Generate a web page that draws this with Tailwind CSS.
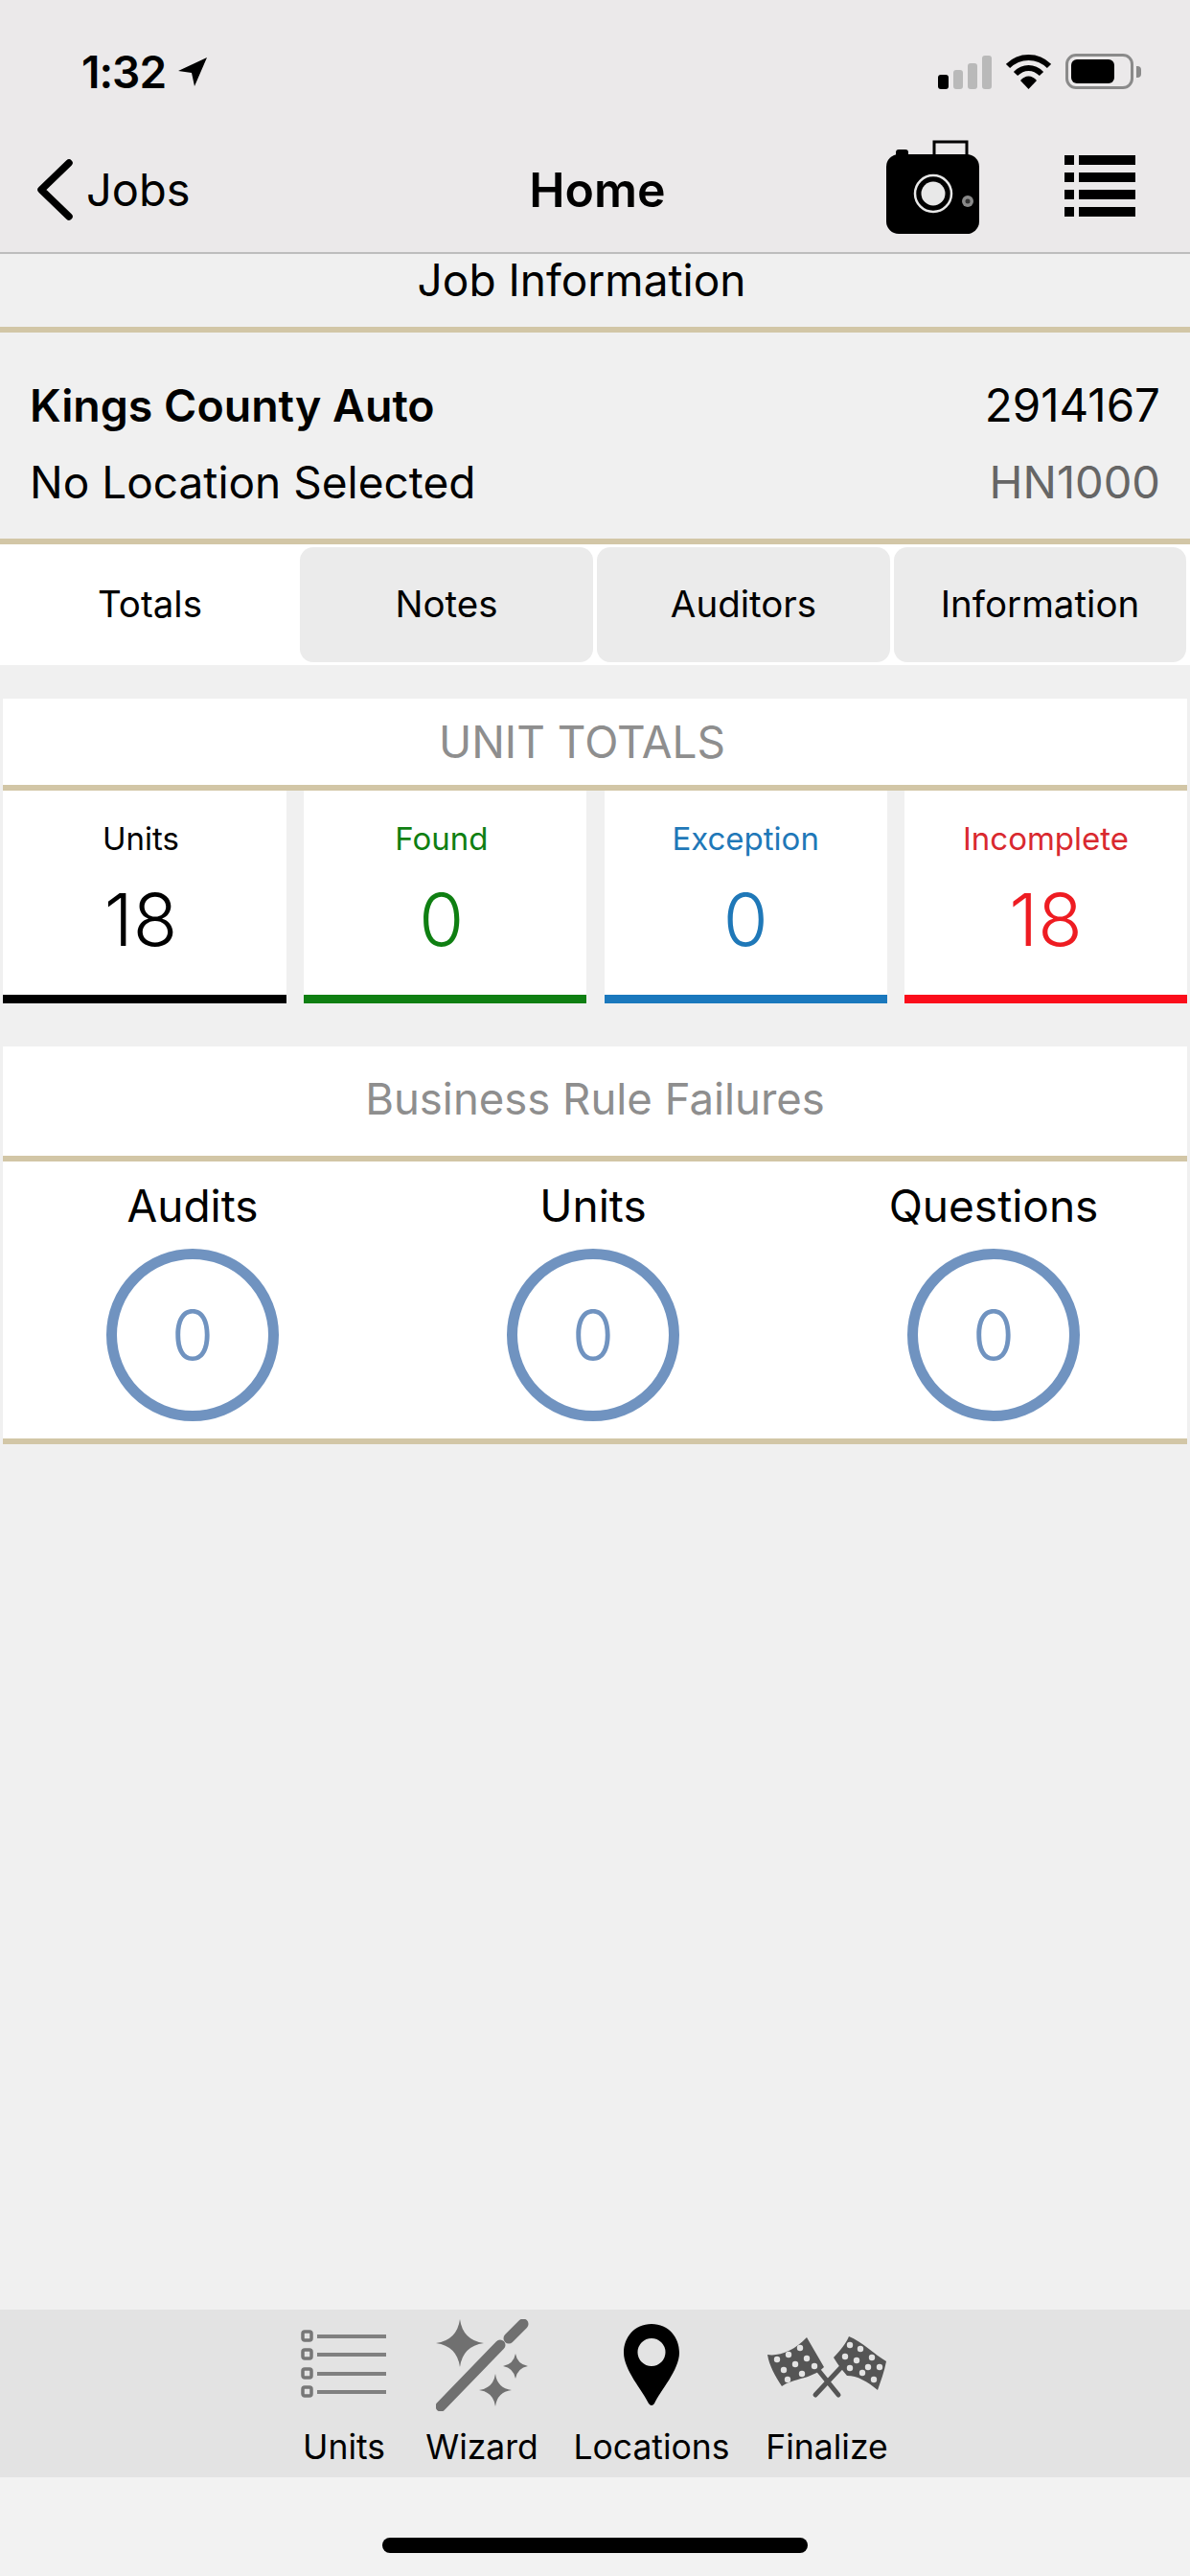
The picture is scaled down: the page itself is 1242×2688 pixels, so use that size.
<!DOCTYPE html>
<html lang="en">
<head>
  <meta charset="UTF-8" />
  <title>Home</title>
  <script src="https://cdn.jsdelivr.net/npm/@tailwindcss/browser@4"></script>
</head>
<body class="bg-[#f0f0f0] font-['Inter',sans-serif] text-black">
  <div class="w-[1242px] h-[2688px] flex flex-col overflow-hidden">

    <!-- status bar + nav -->
    <header class="h-[265px] shrink-0 bg-[#ebe9ea] border-b-2 border-[#bdbdbd]">
      <div class="h-[148px] flex items-start justify-between pl-[85px] pr-[51px] pt-[50px]">
        <div class="flex items-center gap-[12px]">
          <span class="text-[46px] leading-[50px] font-semibold tracking-[-1px]">1:32</span>
          <svg class="w-[32px] h-[32px]" viewBox="0 0 32 32"><path d="M31 1 L1 15 L15 17 L18 31 Z" fill="#000"/></svg>
        </div>
        <div class="flex items-center gap-[15px] pt-[6px]">
          <div class="flex items-end gap-[5px] h-[36px]">
            <div class="w-[11px] h-[15px] rounded-[3px] bg-black"></div>
            <div class="w-[10px] h-[20px] rounded-[3px] bg-[#b9b9b9]"></div>
            <div class="w-[10px] h-[27px] rounded-[3px] bg-[#b9b9b9]"></div>
            <div class="w-[10px] h-[35px] rounded-[3px] bg-[#b9b9b9]"></div>
          </div>
          <svg class="w-[47px] h-[36px]" viewBox="0 0 47 36">
            <path d="M2 12 C14 0 33 0 45 12" fill="none" stroke="#000" stroke-width="6"/>
            <path d="M10 20 C18 12 29 12 37 20" fill="none" stroke="#000" stroke-width="6"/>
            <path d="M15 27 C20 21 27 21 32 27 L23.500 36 Z" fill="#000"/>
          </svg>
          <div class="flex items-center gap-[3px]">
            <div class="w-[71px] h-[37px] rounded-[11px] border-[3px] border-[#8a8a8a] p-[3px] pr-[17px]">
              <div class="w-full h-full rounded-[6px] bg-black"></div>
            </div>
            <div class="w-[5px] h-[12px] rounded-r-[4px] bg-[#8a8a8a]"></div>
          </div>
        </div>
      </div>
      <div class="h-[115px] grid grid-cols-3 items-center pl-[38px] pr-[57px]">
        <div class="flex items-center gap-[14px] -mt-[16px]">
          <svg class="w-[38px] h-[64px]" viewBox="0 0 38 64"><path d="M34 4 L5 32 L34 60" fill="none" stroke="#000" stroke-width="7.500" stroke-linecap="round" stroke-linejoin="round"/></svg>
          <span class="text-[47px] leading-[56px]">Jobs</span>
        </div>
        <div class="text-center text-[50px] leading-[56px] font-semibold -mt-[16px] ml-[24px]">Home</div>
        <div class="flex items-start justify-end gap-[89px] -mt-[21px]">
          <svg class="w-[97px] h-[98px]" viewBox="0 0 97 98">
            <path d="M50 17 V2 H84 V17" fill="#ebe9ea" stroke="#000" stroke-width="3"/>
            <rect x="10" y="10" width="13" height="9" rx="3" fill="#000"/>
            <rect x="0" y="15" width="97" height="83" rx="13" fill="#000"/>
            <circle cx="49" cy="56" r="19" fill="none" stroke="#e8e8e8" stroke-width="2.500"/>
            <circle cx="49" cy="56" r="12.500" fill="#e8e8e8"/>
            <circle cx="85" cy="64" r="6" fill="#8a8a8a"/>
            <circle cx="85" cy="64" r="2.500" fill="#333"/>
          </svg>
          <div class="w-[74px] flex flex-col gap-[8px] mt-[16px]">
            <div class="flex gap-[5px]"><div class="w-[10px] h-[10px] bg-black"></div><div class="flex-1 h-[10px] bg-black"></div></div>
            <div class="flex gap-[5px]"><div class="w-[10px] h-[10px] bg-black"></div><div class="flex-1 h-[10px] bg-black"></div></div>
            <div class="flex gap-[5px]"><div class="w-[10px] h-[10px] bg-black"></div><div class="flex-1 h-[10px] bg-black"></div></div>
            <div class="flex gap-[5px]"><div class="w-[10px] h-[10px] bg-black"></div><div class="flex-1 h-[10px] bg-black"></div></div>
          </div>
        </div>
      </div>
    </header>

    <!-- job info -->
    <div class="h-[82px] shrink-0 border-b-[6px] border-[#d2c6a6] text-center text-[46px] leading-[54px] pr-[28px]">Job Information</div>
    <div class="h-[221px] shrink-0 border-b-[6px] border-[#d2c6a6] px-[31px] pt-[48px]">
      <div class="flex justify-between text-[46px] leading-[56px]">
        <span class="text-[46.500px] font-semibold">Kings County Auto</span>
        <span class="text-[47.500px]">2914167</span>
      </div>
      <div class="flex justify-between text-[46px] leading-[56px] mt-[24px]">
        <span>No Location Selected</span>
        <span class="text-[47px] text-[#666]">HN1000</span>
      </div>
    </div>

    <!-- tabs -->
    <div class="h-[126px] shrink-0 bg-white flex text-[38.500px] pr-[4px]">
      <div class="w-[313px] flex items-center justify-center">Totals</div>
      <div class="w-[306px] my-[3px] rounded-[14px] bg-[#ebebeb] flex items-center justify-center">Notes</div>
      <div class="w-[306px] my-[3px] ml-[4px] rounded-[14px] bg-[#ebebeb] flex items-center justify-center">Auditors</div>
      <div class="w-[305px] my-[3px] ml-[4px] rounded-[14px] bg-[#ebebeb] flex items-center justify-center">Information</div>
    </div>

    <!-- unit totals -->
    <section class="mt-[35px] mx-[3px] shrink-0">
      <div class="h-[96px] bg-white border-b-[6px] border-[#d2c6a6] flex items-center justify-center text-[46px] text-[#8e8e8e] pr-[27px]">UNIT TOTALS</div>
      <div class="flex justify-between">
        <div class="w-[296px] h-[222px] bg-white border-b-[9px] border-black flex flex-col items-center pt-[30px] pr-[8px]">
          <span class="text-[33px] leading-[40px]">Units</span>
          <span class="text-[76px] leading-[86px] mt-[21px] font-[350]">18</span>
        </div>
        <div class="w-[295px] h-[222px] bg-white border-b-[9px] border-[#0f7f12] flex flex-col items-center pt-[30px] pr-[8px] text-[#0f7f12]">
          <span class="text-[33px] leading-[40px]">Found</span>
          <span class="text-[76px] leading-[86px] mt-[21px] font-[350]">0</span>
        </div>
        <div class="w-[295px] h-[222px] bg-white border-b-[9px] border-[#1a78bd] flex flex-col items-center pt-[30px] text-[#1f78b8]">
          <span class="text-[33px] leading-[40px]">Exception</span>
          <span class="text-[76px] leading-[86px] mt-[21px] font-[350]">0</span>
        </div>
        <div class="w-[295px] h-[222px] bg-white border-b-[9px] border-[#fb0d1b] flex flex-col items-center pt-[30px] text-[#ee1c22]">
          <span class="text-[33px] leading-[40px] text-[#d9292f]">Incomplete</span>
          <span class="text-[76px] leading-[86px] mt-[21px] font-[350]">18</span>
        </div>
      </div>
    </section>

    <!-- business rule failures -->
    <section class="mt-[45px] mx-[3px] shrink-0 bg-white">
      <div class="h-[120px] border-b-[6px] border-[#d2c6a6] flex items-center justify-center text-[45.500px] text-[#8e8e8e] pb-[4px]">Business Rule Failures</div>
      <div class="h-[295px] border-b-[6px] border-[#d2c6a6] flex gap-[238px] pl-[108px] pt-[18px] text-[46px]">
        <div class="w-[180px] flex flex-col items-center">
          <span class="leading-[56px] whitespace-nowrap">Audits</span>
          <div class="mt-[17px] w-[180px] h-[180px] shrink-0 rounded-full border-[11px] border-[#7093c0] flex items-center justify-center text-[72px] font-light text-[#7093c0]">0</div>
        </div>
        <div class="w-[180px] flex flex-col items-center">
          <span class="leading-[56px] whitespace-nowrap">Units</span>
          <div class="mt-[17px] w-[180px] h-[180px] shrink-0 rounded-full border-[11px] border-[#7093c0] flex items-center justify-center text-[72px] font-light text-[#7093c0]">0</div>
        </div>
        <div class="w-[180px] flex flex-col items-center">
          <span class="leading-[56px] whitespace-nowrap">Questions</span>
          <div class="mt-[17px] w-[180px] h-[180px] shrink-0 rounded-full border-[11px] border-[#7093c0] flex items-center justify-center text-[72px] font-light text-[#7093c0]">0</div>
        </div>
      </div>
    </section>

    <div class="flex-1"></div>

    <!-- bottom toolbar -->
    <nav class="h-[175px] shrink-0 bg-[#e3e3e3] flex items-start pl-[294px] text-[35.500px]">
      <div class="w-[130px] flex flex-col items-center pt-[10px]">
        <svg class="w-[90px] h-[96px]" viewBox="0 0 90 96">
          <g fill="none" stroke="#777" stroke-width="3.500"><rect x="2" y="13" width="9" height="9" rx="2"/><rect x="2" y="32" width="9" height="9" rx="2"/><rect x="2" y="52" width="9" height="9" rx="2"/><rect x="2" y="71" width="9" height="9" rx="2"/></g>
          <g stroke="#808080" stroke-width="4"><path d="M17 18 H89"/><path d="M17 37 H89"/><path d="M17 57 H89"/><path d="M17 76 H89"/></g>
        </svg>
        <span class="leading-[44px] mt-[16px]">Units</span>
      </div>
      <div class="w-[158px] flex flex-col items-center pt-[10px]">
        <svg class="w-[97px] h-[96px]" viewBox="0 0 97 96" fill="#707070">
          <path d="M5 91 L67 27" stroke="#707070" stroke-width="11" stroke-linecap="round"/>
          <path d="M76 20 L91 5" stroke="#707070" stroke-width="11" stroke-linecap="round"/>
          <path d="M25 0 Q28 22 50 25 Q28 28 25 50 Q22 28 0 25 Q22 22 25 0Z"/>
          <path d="M83 36 Q85 47 96 49 Q85 51 83 62 Q81 51 70 49 Q81 47 83 36Z"/>
          <path d="M62 57 Q64 72 79 74 Q64 76 62 91 Q60 76 45 74 Q60 72 62 57Z"/>
        </svg>
        <span class="leading-[44px] mt-[16px]">Wizard</span>
      </div>
      <div class="w-[196px] flex flex-col items-center pt-[10px]">
        <svg class="w-[58px] h-[96px]" viewBox="0 0 58 96">
          <path fill-rule="evenodd" d="M29 5 C47 5 58 19 58 35 C58 53 38 75 32 88 Q29 92 26 88 C20 75 0 53 0 35 C0 19 11 5 29 5Z M29 20 A14.500 14.500 0 1 0 29 49 A14.500 14.500 0 1 0 29 20Z" fill="#000"/>
        </svg>
        <span class="leading-[44px] mt-[16px]">Locations</span>
      </div>
      <div class="w-[170px] flex flex-col items-center pt-[10px]">
        <svg class="w-[128px] h-[96px]" viewBox="0 0 128 96">
          <g transform="translate(0 17)">
            <g stroke="#555" stroke-width="5" stroke-linecap="round"><path d="M52 62 L82 30"/><path d="M76 62 L50 30"/></g>
            <path d="M2 20 C14 22 30 16 43 2 L61 33 C48 46 30 44 17 53 C10 42 4 32 2 20Z" fill="#555"/>
            <path d="M71 23 C78 16 84 8 87 1 C100 6 114 20 126 27 C124 38 120 48 117 57 C106 48 96 42 85 42 C80 36 75 30 71 23Z" fill="#555"/>
            <g fill="#e3e3e3">
              <circle cx="12" cy="25" r="3.200"/><circle cx="24" cy="20" r="3.200"/><circle cx="36" cy="13" r="3.200"/>
              <circle cx="19" cy="36" r="3.200"/><circle cx="31" cy="30" r="3.200"/><circle cx="43" cy="24" r="3.200"/>
              <circle cx="23" cy="46" r="3.200"/><circle cx="38" cy="40" r="3.200"/><circle cx="51" cy="32" r="3.200"/>
              <circle cx="88" cy="10" r="3.200"/><circle cx="99" cy="14" r="3.200"/><circle cx="111" cy="23" r="3.200"/>
              <circle cx="83" cy="22" r="3.200"/><circle cx="95" cy="26" r="3.200"/><circle cx="107" cy="33" r="3.200"/><circle cx="119" cy="33" r="3.200"/>
              <circle cx="88" cy="34" r="3.200"/><circle cx="101" cy="39" r="3.200"/><circle cx="113" cy="46" r="3.200"/>
            </g>
          </g>
        </svg>
        <span class="leading-[44px] mt-[16px]">Finalize</span>
      </div>
    </nav>

    <div class="h-[103px] shrink-0 bg-[#f2f2f2] flex justify-center pt-[63px]">
      <div class="w-[444px] h-[16px] rounded-full bg-black"></div>
    </div>
  </div>
</body>
</html>
